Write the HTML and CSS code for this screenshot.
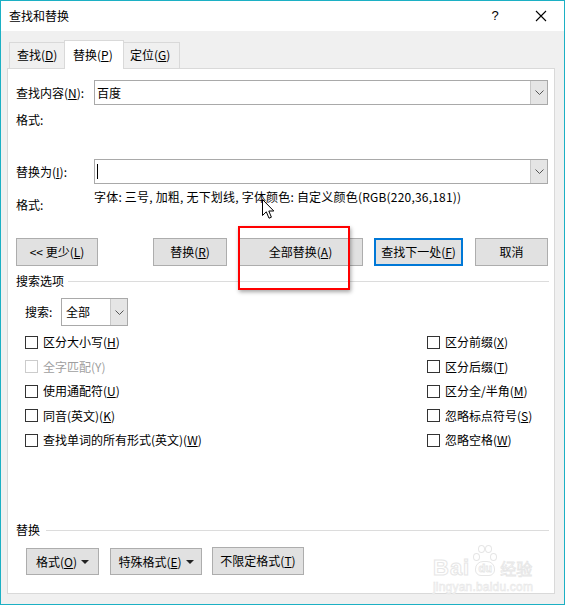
FILE: index.html
```html
<!DOCTYPE html>
<html lang="zh-CN">
<head>
<meta charset="utf-8">
<title>查找和替换</title>
<link rel="stylesheet" href="styles.css">
</head>
<body>
<div class="window">
  <div class="titlebar">
    <span class="title">查找和替换</span>
    <span class="help">?</span>
    <span class="close"><svg width="12" height="12" viewBox="0 0 12 12"><path d="M1 1L11 11M11 1L1 11" stroke="#000" stroke-width="1.1" fill="none"/></svg></span>
  </div>
  <div class="client">
    <div class="tabs">
      <div class="tab first">查找(<u>D</u>)</div>
      <div class="tab active">替换(<u>P</u>)</div>
      <div class="tab last">定位(<u>G</u>)</div>
    </div>
    <div class="panel">
      <div class="row find">
        <span class="lbl">查找内容(<u>N</u>):</span>
        <div class="combo"><span class="val">百度</span><span class="drop"><svg width="9" height="5" viewBox="0 0 9 5"><path d="M0.5 0.5L4.5 4.5L8.5 0.5" stroke="#555" fill="none"/></svg></span></div>
      </div>
      <div class="fmt1"><span class="lbl">格式:</span></div>
      <div class="row repl">
        <span class="lbl">替换为(<u>I</u>):</span>
        <div class="combo"><span class="caret"></span><span class="drop"><svg width="9" height="5" viewBox="0 0 9 5"><path d="M0.5 0.5L4.5 4.5L8.5 0.5" stroke="#555" fill="none"/></svg></span></div>
      </div>
      <div class="fmtrow">
        <span class="lbl fmtlbl">格式:</span>
        <span class="fmtval">字体: 三号, 加粗, 无下划线, 字体颜色: 自定义颜色(RGB(220,36,181))</span>
      </div>
      <div class="btnrow">
        <div class="btn b1">&lt;&lt; 更少(<u>L</u>)</div>
        <div class="btn b2">替换(<u>R</u>)</div>
        <div class="btn b3">全部替换(<u>A</u>)</div>
        <div class="btn b4 focus">查找下一处(<u>F</u>)</div>
        <div class="btn b5">取消</div>
      </div>
      <div class="section s1"><span>搜索选项</span><div class="line"></div></div>
      <div class="searchrow">
        <span class="slbl">搜索:</span>
        <div class="select"><span class="val">全部</span><span class="drop"><svg width="9" height="5" viewBox="0 0 9 5"><path d="M0.5 0.5L4.5 4.5L8.5 0.5" stroke="#555" fill="none"/></svg></span></div>
      </div>
      <div class="options">
        <div class="col left">
          <div class="opt"><span class="box"></span>区分大小写(<u>H</u>)</div>
          <div class="opt disabled"><span class="box"></span>全字匹配(Y)</div>
          <div class="opt"><span class="box"></span>使用通配符(<u>U</u>)</div>
          <div class="opt"><span class="box"></span>同音(英文)(<u>K</u>)</div>
          <div class="opt"><span class="box"></span>查找单词的所有形式(英文)(<u>W</u>)</div>
        </div>
        <div class="col right">
          <div class="opt"><span class="box"></span>区分前缀(<u>X</u>)</div>
          <div class="opt"><span class="box"></span>区分后缀(<u>T</u>)</div>
          <div class="opt"><span class="box"></span>区分全/半角(<u>M</u>)</div>
          <div class="opt"><span class="box"></span>忽略标点符号(<u>S</u>)</div>
          <div class="opt"><span class="box"></span>忽略空格(<u>W</u>)</div>
        </div>
      </div>
      <div class="section s2"><span>替换</span><div class="line"></div></div>
      <div class="btnrow2">
        <div class="btn c1">格式(<u>O</u>) <span class="tri"></span></div>
        <div class="btn c2">特殊格式(<u>E</u>) <span class="tri"></span></div>
        <div class="btn c3">不限定格式(<u>T</u>)</div>
      </div>
    </div>
  </div>
  <div class="redbox"></div>
  <svg class="pointer" width="13" height="21" viewBox="0 0 13 21"><path d="M0.5 0.5L0.5 16.5L4.3 12.8L7 19.2L9.4 18.2L6.8 12L11.8 12Z" fill="#fff" stroke="#000" stroke-width="1" stroke-linejoin="miter"/></svg>
  <div class="watermark">
    <div class="wm1"><span class="bai">Bai</span><span class="paw"><span class="toe t1"></span><span class="toe t2"></span><span class="toe t3"></span><span class="toe t4"></span><span class="du">du</span></span><span class="jy">经验</span></div>
    <div class="wm2">jingyan.baidu.com</div>
  </div>
</div>
</body>
</html>
```

FILE: styles.css
```css
* { box-sizing: border-box; }
html, body { margin: 0; padding: 0; }
body {
  font-family: "Noto Sans CJK SC", "Noto Sans", sans-serif;
  font-size: 12px;
  color: #000;
  background: #f0f0f0;
}
u { text-decoration: underline; text-underline-offset: 1px; }
.window {
  position: relative;
  width: 565px;
  height: 605px;
  border: 1px solid #1cb0c4;
  background: #f0f0f0;
  overflow: hidden;
}
.titlebar {
  height: 30px;
  background: #fff;
  display: flex;
  align-items: center;
  padding-left: 8px;
  line-height: 16px;
}
.title { font-size: 12px; flex: 1; }
.help { width: 20px; margin-right: 30px; text-align: center; font-size: 13px; font-family: "Liberation Sans", sans-serif; }
.close { width: 12px; height: 12px; margin-right: 17px; display: flex; }
.client { padding-top: 9px; }
.tabs {
  display: flex;
  align-items: flex-end;
  height: 28px;
  padding-left: 8px;
}
.tab {
  height: 26px;
  line-height: 24px;
  border-top: 1px solid #d9d9d9;
  background: #f0f0f0;
  font-size: 12px;
}
.tab.first { width: 55px; border-left: 1px solid #d9d9d9; padding-left: 7px; }
.tab.active {
  position: relative;
  z-index: 1;
  width: 60px;
  height: 29px;
  margin-bottom: -1px;
  border-left: 1px solid #d9d9d9;
  border-right: 1px solid #d9d9d9;
  background: #fff;
  padding-left: 8px;
  line-height: 27px;
}
.tab.last { width: 56px; border-right: 1px solid #d9d9d9; padding-left: 6px; }
.panel {
  margin-left: 6px;
  width: 548px;
  height: 526px;
  border: 1px solid #d9d9d9;
  background: #fff;
  display: flex;
  flex-direction: column;
}
.row { display: flex; align-items: center; height: 25px; }
.row.find { margin-top: 11px; }
.row.repl { margin-top: 29px; }
.lbl { width: 86px; padding-left: 8px; line-height: 16px; white-space: nowrap; }
.combo {
  width: 454px;
  height: 25px;
  border: 1px solid #a9a9a9;
  display: flex;
  align-items: center;
  position: relative;
}
.combo .val { flex: 1; padding-left: 2px; line-height: 16px; }
.caret { width: 1px; height: 15px; background: #000; margin-left: 2px; margin-right: auto; }
.drop {
  width: 17px;
  height: 23px;
  background: #e5e5e5;
  border-left: 1px solid #c8c8c8;
  display: flex;
  align-items: center;
  justify-content: center;
}
.fmt1 { margin-top: 5px; height: 20px; display: flex; align-items: center; }
.fmtrow { display: flex; align-items: flex-start; height: 31px; }
.fmtlbl { margin-top: 13px; }
.fmtval { margin-top: 5px; line-height: 16px; white-space: nowrap; letter-spacing: 0.2px; }
.btnrow { display: flex; margin-top: 23px; height: 28px; }
.btn {
  height: 28px;
  background: #e1e1e1;
  border: 1px solid #adadad;
  display: flex;
  align-items: center;
  justify-content: center;
  line-height: 16px;
  white-space: nowrap;
}
.b1 { width: 82px; margin-left: 8px; }
.b2 { width: 74px; margin-left: 55px; }
.b3 { width: 125px; margin-left: 11px; }
.b4 { width: 89px; margin-left: 11px; }
.b5 { width: 73px; margin-left: 12px; }
.btn.focus { border: 2px solid #0078d7; }
.section { display: flex; align-items: center; height: 16px; line-height: 16px; padding-left: 8px; }
.section .line { flex: 1; height: 1px; background: #dcdcdc; margin-left: 4px; margin-right: 5px; }
.s1 { margin-top: 7px; }
.s2 { margin-top: auto; }
.s2 .line { margin-left: 6px; }
.searchrow { display: flex; align-items: center; margin-top: 9px; height: 28px; padding-left: 17px; }
.slbl { width: 36px; line-height: 16px; }
.select {
  width: 67px;
  height: 28px;
  border: 1px solid #a9a9a9;
  display: flex;
  align-items: center;
}
.select .val { flex: 1; padding-left: 4px; line-height: 16px; }
.select .drop { height: 26px; }
.options { display: flex; margin-top: 4px; padding-left: 17px; }
.col { display: flex; flex-direction: column; }
.col.left { width: 402px; }
.opt { height: 24.5px; display: flex; align-items: center; line-height: 16px; white-space: nowrap; }
.box { width: 13px; height: 13px; border: 1px solid #333; margin-right: 5px; background: #fff; }
.opt.disabled { color: #a0a0a0; }
.opt.disabled .box { border-color: #cccccc; }
.btnrow2 { display: flex; margin-top: 9px; margin-bottom: 18px; height: 28px; align-items: flex-end; }
.c1 { width: 73px; height: 27px; margin-left: 18px; }
.c2 { width: 92px; height: 27px; margin-left: 11px; }
.c3 { width: 92px; height: 28px; margin-left: 10px; }
.tri {
  display: inline-block;
  width: 0; height: 0;
  border-left: 4px solid transparent;
  border-right: 4px solid transparent;
  border-top: 4px solid #222;
  margin-left: 4px;
}
.redbox {
  position: absolute;
  left: 237px;
  top: 225px;
  width: 112px;
  height: 64px;
  border: 2px solid #f00;
  box-shadow: 1px 2px 4px rgba(0,0,0,0.35);
}
.pointer { position: absolute; left: 261px; top: 198px; }
.watermark {
  position: absolute;
  left: 432px;
  top: 541px;
  width: 100px;
  color: #fff;
  font-family: "Liberation Sans", sans-serif;
}
.wm1 { display: flex; align-items: flex-end; height: 36px; }
.bai { font-size: 22px; line-height: 20px; font-weight: bold; -webkit-text-stroke: 1px #e6e6e6; letter-spacing: 1px; }
.paw { position: relative; width: 26px; height: 36px; margin: 0 2px; }
.toe { position: absolute; width: 7px; height: 8px; border: 1px solid #e6e6e6; border-radius: 50%; }
.t1 { left: 1px; top: 11px; }
.t2 { left: 6px; top: 3px; }
.t3 { left: 13px; top: 3px; }
.t4 { left: 18px; top: 11px; }
.du {
  position: absolute; left: 3px; top: 19px; width: 20px; height: 15px;
  border: 1px solid #e6e6e6; border-radius: 8px 8px 6px 6px;
  font-size: 11px; line-height: 12px; text-align: center; font-weight: bold; color: #fff;
  -webkit-text-stroke: 0.8px #e6e6e6;
}
.jy { font-family: "Noto Sans CJK SC", sans-serif; font-size: 16px; line-height: 20px; color: #fff; -webkit-text-stroke: 0.8px #e6e6e6; }
.wm2 { font-size: 12px; line-height: 14px; margin-top: 2px; color: #fff; -webkit-text-stroke: 0.6px #e6e6e6; letter-spacing: 0.2px; }
```
